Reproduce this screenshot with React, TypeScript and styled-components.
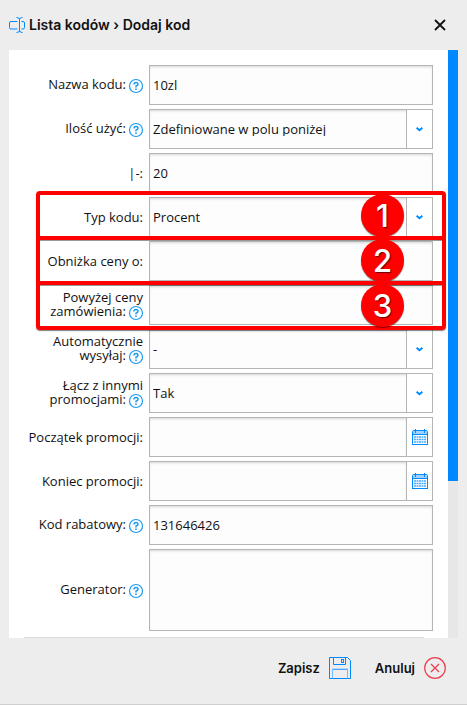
import React, { useId } from 'react';
import styled, { createGlobalStyle } from 'styled-components';

const GlobalStyle = createGlobalStyle`
  *, *::before, *::after { box-sizing: border-box; }
  body {
    margin: 0;
    background: #ededed;
    color: #111;
    font: 13px/14px "Open Sans", "Noto Sans", sans-serif;
  }
`;

const blue = '#0088ff';
const line = '#b5b5b5';
const headingFont = 'Inter, "Noto Sans", sans-serif';

const Dialog = styled.main`
  display: flex;
  flex-direction: column;
  min-height: 100vh;
  border-bottom: 1px solid #cfcfcf;
`;

const Header = styled.header`
  display: flex;
  align-items: center;
  gap: 4px;
  height: 50px;
  padding: 0 20px 0 9px;
`;

const Title = styled.h1`
  flex: 1;
  margin: 0;
  font: 600 14px/20px ${headingFont};
`;

const IconButton = styled.button`
  display: flex;
  padding: 0;
  border: 0;
  background: none;
  color: inherit;
  cursor: pointer;
`;

const Body = styled.div`
  display: flex;
  flex: 1;
  margin: 0 9px;
`;

const Form = styled.form`
  display: flex;
  flex: 1;
  min-width: 0;
  flex-direction: column;
  gap: 4px;
  padding: 15px 15px 0;
  background: #fff;
`;

const ScrollTrack = styled.div`
  width: 10px;
  background: #e7e7e7;
`;

const ScrollThumb = styled.div`
  height: 73%;
  min-height: 431px;
  background: ${blue};
`;

const Row = styled.div`
  display: grid;
  grid-template-columns: 119px minmax(0, 1fr);
  column-gap: 6px;
  align-items: center;
`;

const Label = styled.label`
  text-align: right;
  white-space: pre-line;
`;

const HelpIcon = styled.svg`
  width: 14px;
  height: 14px;
  margin-left: 3px;
  vertical-align: -4px;
  overflow: visible;
`;

const Control = styled.div`
  position: relative;
  display: flex;
  height: 40px;
  border: 1px solid ${line};
  background: #fff;
`;

const fieldLook = `
  display: block;
  flex: 1;
  min-width: 0;
  margin: 0;
  padding: 0 3px;
  border: 0;
  border-radius: 0;
  background: #fdfdfd;
  box-shadow: inset 0 2px 3px -1px rgba(0, 0, 0, 0.16);
  color: inherit;
  font: inherit;
  outline-color: ${blue};
`;

const Input = styled.input`
  ${fieldLook}
`;

const Select = styled.select`
  ${fieldLook}
  appearance: none;
  padding-right: 28px;
`;

const TextArea = styled.textarea`
  ${fieldLook}
  width: 100%;
  height: 82px;
  padding: 4px;
  border: 1px solid ${line};
  resize: none;
`;

const Addon = styled.button`
  display: grid;
  place-items: center;
  width: 26px;
  padding: 0;
  border: 0;
  border-left: 1px solid ${line};
  background: #fff;
  cursor: pointer;
`;

const ArrowCell = styled.span`
  position: absolute;
  inset: 0 0 0 auto;
  display: grid;
  place-items: center;
  width: 26px;
  border-left: 1px solid ${line};
  background: #fff;
  pointer-events: none;
`;

const Divider = styled.hr`
  width: calc(100% - 9px);
  height: 1px;
  margin: 2px 0 0;
  border: 0;
  background: #dadada;
`;

const Highlighted = styled.div`
  position: relative;
  display: flex;
  flex-direction: column;
  gap: 4px;
`;

const Frame = styled.div`
  position: absolute;
  z-index: 1;
  inset: -6px -13px -5px 12px;
  display: grid;
  grid-template-rows: repeat(3, 1fr);
  gap: 4px;
  border: 4px solid #ff0000;
  border-radius: 4px;
  box-shadow: 0 1px 1px rgba(0, 0, 0, 0.5);
  pointer-events: none;
`;

const FrameCell = styled.div`
  display: flex;
  align-items: center;
  justify-content: flex-end;
  min-height: 0;
  padding-right: 38px;

  & + & {
    box-shadow: 0 -4px #ff0000, inset 0 1px rgba(0, 0, 0, 0.4);
  }
`;

const Badge = styled.span`
  flex: none;
  width: 43px;
  height: 43px;
  border-radius: 50%;
  background: #ff0000;
  box-shadow: 0 1px 1px rgba(0, 0, 0, 0.5);
  color: #fff;
  font: 500 31px/43px ${headingFont};
  text-align: center;
  text-shadow: 1px 1px 1px rgba(0, 0, 0, 0.6);
`;

const Footer = styled.footer`
  display: flex;
  align-items: center;
  justify-content: flex-end;
  gap: 24px;
  height: 66px;
  padding: 0 21px 6px;
`;

const ActionButton = styled.button`
  display: flex;
  align-items: center;
  gap: 9px;
  padding: 0;
  border: 0;
  background: none;
  color: inherit;
  font: 600 13px/22px ${headingFont};
  cursor: pointer;
`;

const RenameIcon = () => (
  <svg width="16" height="16" viewBox="0 0 16 16" fill="none" stroke={blue} aria-hidden="true">
    <path d="M8.500 4.500H2Q.5 4.500 .5 6v4.500Q.5 12 2 12h6.500M12.500 4.500H14q1.500 0 1.500 1.500v4.500Q15.500 12 14 12h-1.500M10.500 1.500v13M7.500.5q3 0 3 2 0-2 3-2M7.500 15.500q3 0 3-2 0 2 3 2" />
  </svg>
);

const CloseIcon = () => (
  <svg width="14" height="14" viewBox="0 0 14 14" fill="none" stroke="#111" strokeWidth="1.8" aria-hidden="true">
    <path d="M2 2l10 10M12 2L2 12" />
  </svg>
);

const Help = () => (
  <HelpIcon viewBox="0 0 14 14" fill="none" stroke="#1c9bf0" aria-hidden="true">
    <circle cx="7" cy="7" r="6.500" strokeWidth="1.200" />
    <path d="M5 5.500q0-2 2-2t2 1.800Q9 6.400 7 7.200v1.300" strokeWidth="1.500" />
    <path d="M7 9.500V11" strokeWidth="1.600" />
  </HelpIcon>
);

const ChevronIcon = () => (
  <svg width="7" height="5" viewBox="0 0 7 5" fill="none" stroke={blue} strokeWidth="1.900" aria-hidden="true">
    <path d="M.6 .8l2.900 2.500L6.400 .8" />
  </svg>
);

const CalendarIcon = () => (
  <svg width="16" height="16" viewBox="0 0 16 16" fill="none" aria-hidden="true">
    <rect x="1" y="2" width="14" height="3" fill="#9fd2ff" />
    <rect x=".5" y="1.500" width="15" height="14" rx="1" stroke={blue} />
    <path d="M0 5.500h16M0 15.500h16M3.500 0v4M12.500 0v4" stroke={blue} />
    <path d="M2 8h12M2 10.500h12M2 13h12" stroke="#4aaaff" strokeWidth="1.500" strokeDasharray="2 .5" />
  </svg>
);

const SaveIcon = () => (
  <svg width="22" height="22" viewBox="0 0 22 22" fill="none" stroke={blue} aria-hidden="true">
    <path d="M.5.500h18l3 3v18H.5z" />
    <path d="M4.500.500v7h12v-7" />
    <path d="M3 12h16" stroke="#b3d9ff" strokeWidth="2" />
    <path d="M3.500 21.500v-9.500M18.500 21.500v-9.500" stroke="#76bcff" />
    <path d="M4 12.500h14" stroke="#4aa6ff" />
    <rect x="12.500" y="2.500" width="2" height="3" />
  </svg>
);

const CancelIcon = () => (
  <svg width="22" height="22" viewBox="0 0 22 22" fill="none" stroke="#ea3e50" strokeWidth="1.200" aria-hidden="true">
    <circle cx="11" cy="11" r="10.300" />
    <path d="M7 7l8 8M15 7l-8 8" />
  </svg>
);

type FieldProps = {
  label: string;
  kind?: 'text' | 'select' | 'date' | 'area';
  value?: string;
  help?: boolean;
};

function Field({ label, kind = 'text', value = '', help }: FieldProps) {
  const id = useId();
  return (
    <Row>
      <Label htmlFor={id}>
        {label}
        {help && <Help />}
      </Label>
      {kind === 'area' ? (
        <TextArea id={id} defaultValue={value} />
      ) : (
        <Control>
          {kind === 'select' ? (
            <>
              <Select id={id} defaultValue={value}>
                <option value={value}>{value}</option>
              </Select>
              <ArrowCell>
                <ChevronIcon />
              </ArrowCell>
            </>
          ) : (
            <Input id={id} type="text" defaultValue={value} />
          )}
          {kind === 'date' && (
            <Addon type="button" aria-label="Kalendarz">
              <CalendarIcon />
            </Addon>
          )}
        </Control>
      )}
    </Row>
  );
}

export default function App() {
  return (
    <>
      <GlobalStyle />
      <Dialog>
        <Header>
          <RenameIcon />
          <Title>Lista kodów › Dodaj kod</Title>
          <IconButton type="button" aria-label="Zamknij">
            <CloseIcon />
          </IconButton>
        </Header>
        <Body>
          <Form id="code-form">
            <Field label="Nazwa kodu:" value="10zl" help />
            <Field label="Ilość użyć:" kind="select" value="Zdefiniowane w polu poniżej" help />
            <Field label="|-:" value="20" />
            <Highlighted>
              <Field label="Typ kodu:" kind="select" value="Procent" />
              <Field label="Obniżka ceny o:" />
              <Field label={'Powyżej ceny\nzamówienia:'} help />
              <Frame>
                {[1, 2, 3].map((n) => (
                  <FrameCell key={n}>
                    <Badge>{n}</Badge>
                  </FrameCell>
                ))}
              </Frame>
            </Highlighted>
            <Field label={'Automatycznie\nwysyłaj:'} kind="select" value="-" help />
            <Field label={'Łącz z innymi\npromocjami:'} kind="select" value="Tak" help />
            <Field label="Początek promocji:" kind="date" />
            <Field label="Koniec promocji:" kind="date" />
            <Field label="Kod rabatowy:" value="131646426" help />
            <Field label="Generator:" kind="area" help />
            <Divider />
          </Form>
          <ScrollTrack>
            <ScrollThumb />
          </ScrollTrack>
        </Body>
        <Footer>
          <ActionButton type="submit" form="code-form">
            Zapisz
            <SaveIcon />
          </ActionButton>
          <ActionButton type="button">
            Anuluj
            <CancelIcon />
          </ActionButton>
        </Footer>
      </Dialog>
    </>
  );
}
